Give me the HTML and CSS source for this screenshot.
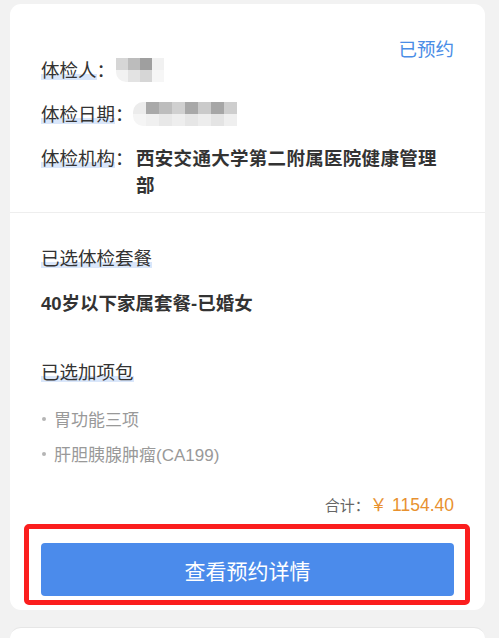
FILE: index.html
```html
<!DOCTYPE html>
<html lang="zh-CN">
<head>
<meta charset="utf-8">
<link rel="stylesheet" href="styles.css">
</head>
<body>
<div class="card">
  <div class="status">已预约</div>
  <div class="info">
    <div class="row">
      <span class="label"><span class="hl">体检人</span>：</span>
      <span class="mosaic name">
        <i style="background:#d6d6d6"></i><i style="background:#bcbcbc"></i><i style="background:#9f9f9f"></i><i style="background:#f1f1f1"></i>
        <i style="background:#f2f2f2"></i><i style="background:#e3e3e3"></i><i style="background:#d6d6d6"></i><i style="background:#f6f6f6"></i>
      </span>
    </div>
    <div class="row">
      <span class="label"><span class="hl">体检日期</span>：</span>
      <span class="mosaic date">
        <i style="background:#ececec"></i><i style="background:#a9a9a9"></i><i style="background:#bdbdbd"></i><i style="background:#d0d0d0"></i><i style="background:#a8a8a8"></i><i style="background:#cacaca"></i><i style="background:#a6a6a6"></i><i style="background:#cecece"></i>
        <i style="background:#f5f5f5"></i><i style="background:#f0f0f0"></i><i style="background:#e8e8e8"></i><i style="background:#eeeeee"></i><i style="background:#e6e6e6"></i><i style="background:#ededed"></i><i style="background:#e4e4e4"></i><i style="background:#efefef"></i>
      </span>
    </div>
    <div class="row">
      <span class="label"><span class="hl">体检机构</span>：</span>
      <span class="value">西安交通大学第二附属医院健康管理部</span>
    </div>
  </div>
  <div class="detail">
    <div class="title"><span class="hl">已选体检套餐</span></div>
    <div class="package">40岁以下家属套餐-已婚女</div>
    <div class="title addon"><span class="hl">已选加项包</span></div>
    <ul class="items">
      <li><span class="dot"></span>胃功能三项</li>
      <li><span class="dot"></span>肝胆胰腺肿瘤(CA199)</li>
    </ul>
    <div class="total">合计：<span class="amount">￥ 1154.40</span></div>
    <div class="action">
      <button class="btn">查看预约详情</button>
      <div class="mark"></div>
    </div>
  </div>
</div>
<div class="card next"></div>
</body>
</html>
```
FILE: styles.css
```css
html, body {
  margin: 0;
  padding: 0;
  background: #f2f2f2;
}
body {
  font-family: "Liberation Sans", "Noto Sans CJK SC", sans-serif;
  color: #333;
  padding-top: 4px;
  height: 634px;
  overflow: hidden;
}
.card {
  position: relative;
  background: #fff;
  margin: 0 14px 0 10px;
  border-radius: 11px;
}
.card.next {
  margin-top: 17px;
  height: 40px;
  border-top: 1px solid #e6e6e6;
}
.status {
  position: absolute;
  top: 33px;
  right: 31px;
  font-size: 18.5px;
  line-height: 26px;
  color: #4a8de6;
}
.info {
  padding: 53px 31px 13px;
  border-bottom: 1px solid #eeeeee;
}
.row {
  display: flex;
  align-items: flex-start;
  font-size: 18.5px;
  line-height: 27px;
  margin-bottom: 17px;
}
.row:last-child {
  margin-bottom: 0;
}
.label {
  flex: none;
  white-space: nowrap;
  width: 95px;
}
.hl {
  background: linear-gradient(to bottom, transparent 67%, #d9e6fa 67%, #d9e6fa 94%, transparent 94%);
}
.value {
  font-weight: bold;
  letter-spacing: 0.3px;
  color: #333;
}
.mosaic {
  display: grid;
  filter: blur(0.6px);
  margin-top: 1px;
}
.mosaic i {
  display: block;
  height: 12px;
}
.mosaic.name {
  grid-template-columns: repeat(4, 12px);
  margin-left: -20px;
  border-bottom-left-radius: 10px;
  overflow: hidden;
}
.mosaic.date {
  grid-template-columns: repeat(8, 13px);
  margin-left: -3px;
  border-top-left-radius: 10px;
  border-bottom-left-radius: 10px;
  overflow: hidden;
}
.detail {
  padding: 32px 31px 14px;
}
.title {
  font-size: 18.5px;
  line-height: 27px;
  height: 27px;
}
.package {
  margin-top: 18px;
  font-size: 18.5px;
  line-height: 27px;
  height: 27px;
  font-weight: bold;
}
.title.addon {
  margin-top: 42px;
}
.items {
  list-style: none;
  margin: 20px 0 0;
  padding: 0;
  color: #999;
  font-size: 17px;
}
.items li {
  display: flex;
  align-items: center;
  height: 24px;
  margin-bottom: 11px;
}
.items li:last-child {
  margin-bottom: 0;
}
.dot {
  flex: none;
  width: 4px;
  height: 4px;
  border-radius: 50%;
  background: #b5b5b5;
  margin: 1px 8px 0 1px;
}
.total {
  margin-top: 29px;
  text-align: right;
  font-size: 15px;
  line-height: 22px;
  height: 22px;
  color: #666;
}
.amount {
  color: #e8912f;
  font-size: 17.5px;
}
.action {
  position: relative;
  margin-top: 27px;
}
.btn {
  display: block;
  width: 100%;
  height: 53px;
  border: none;
  border-radius: 4px;
  background: #4b8beb;
  color: #fff;
  font-family: "Liberation Sans", "Noto Sans CJK SC", sans-serif;
  font-size: 21px;
}
.mark {
  position: absolute;
  left: -17px;
  right: -16px;
  top: -19px;
  bottom: -9px;
  border: 5px solid #fb1e1e;
  border-radius: 5px;
  pointer-events: none;
}
```
